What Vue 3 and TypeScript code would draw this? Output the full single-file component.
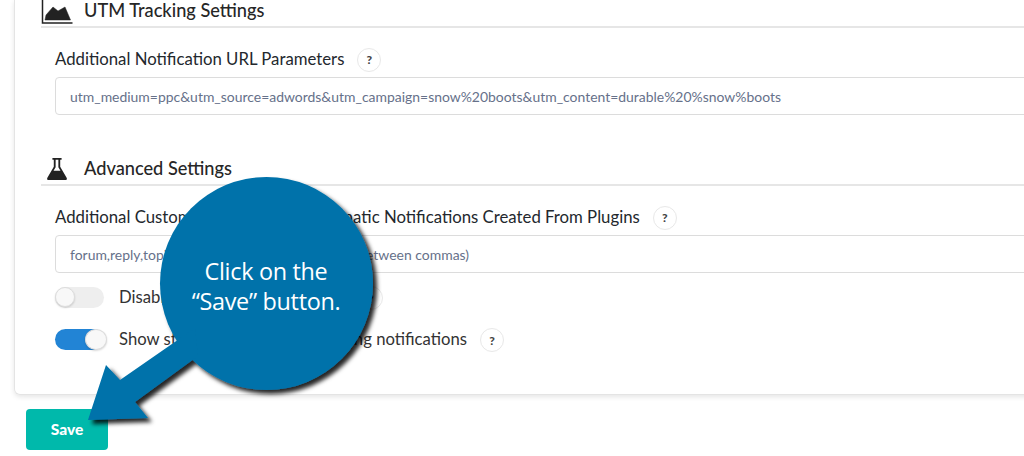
<script setup lang="ts">
/* Each section of the settings card is data; the callout sits over the page */
const sections = [
  {
    key: "utm",
    title: "UTM Tracking Settings",
    label: "Additional Notification URL Parameters",
    value: "utm_medium=ppc&utm_source=adwords&utm_campaign=snow%20boots&utm_content=durable%20%snow%boots",
  },
  {
    key: "advanced",
    title: "Advanced Settings",
    label: "Additional Custom Post Types for Automatic Notifications Created From Plugins",
    value: "forum,reply,topic,product,event,faq (No spaces between commas)",
  },
];

const toggles = [
  { key: "disable", label: "Disable automatic notifications", on: false },
  { key: "status", label: "Show status of all of your outgoing notifications", on: true },
];
</script>

<template>
  <div class="page">
    <div class="card">
      <section v-for="s in sections" :key="s.key" class="section" :class="`section-${s.key}`">
        <h2 class="heading">
          <span class="heading-icon">
            <svg v-if="s.key === 'utm'" width="32" height="24" viewBox="0 0 32 24">
              <path d="M1.500 0v23h30" fill="none" stroke="#222" stroke-width="1.500" />
              <path d="M4 20 L5 15 L12 7 L17 11 L24 7 L29.500 20 Z" fill="#222" stroke="#222" stroke-width="0.500"
                stroke-linejoin="round" />
            </svg>
            <svg v-else width="22" height="24" viewBox="0 0 24 26">
              <path
                d="M7 1h10v2h-1.500v7.500l7 12c.8 1.500 0 2.500-1.500 2.500H3c-1.500 0-2.300-1-1.500-2.500l7-12V3H7z M10.500 3v8L8.200 15h7.600L13.500 11V3z"
                fill="#222" fill-rule="evenodd" />
            </svg>
          </span>
          {{ s.title }}
        </h2>
        <div class="field">
          <div class="field-label">
            {{ s.label }}
            <span class="help">?</span>
          </div>
          <div class="input">{{ s.value }}</div>
        </div>
      </section>

      <div class="toggles">
        <div v-for="t in toggles" :key="t.key" class="toggle-row">
          <span class="switch" :class="{ on: t.on }"><span class="knob"></span></span>
          <span class="toggle-label">{{ t.label }}</span>
          <span class="help">?</span>
        </div>
      </div>
    </div>

    <button class="save" type="button">Save</button>

    <!-- CALLOUT -->
    <div class="callout">
      <svg class="callout-shape" width="1024" height="456" viewBox="0 0 1024 456">
        <defs>
          <filter id="callout-shadow" x="-20%" y="-20%" width="140%" height="140%">
            <feDropShadow dx="4" dy="4" stdDeviation="2" flood-color="#000" flood-opacity="0.85" />
          </filter>
        </defs>
        <g filter="url(#callout-shadow)" fill="#0272aa">
          <circle cx="266.500" cy="283.500" r="106.500" />
          <path d="M195 328 L120 380 L106 365 L88 420 L148 418 L135 402 L198 356 Z" />
        </g>
      </svg>
      <div class="callout-text">Click on the<br />“Save” button.</div>
    </div>
  </div>
</template>

<style>
html,
body {
  margin: 0;
  overflow: hidden;
  background: #fff;
}
</style>

<style scoped>
.page {
  position: relative;
  width: 1024px;
  height: 456px;
  overflow: hidden;
  font-family: Lato, "Open Sans", sans-serif;
  color: #222;
}

.card {
  box-sizing: border-box;
  width: 1060px;
  height: 395px;
  margin-left: 14px;
  padding-left: 26px;
  border: 1px solid #e4e4e4;
  border-top: 0;
  border-radius: 0 0 6px 6px;
  box-shadow: 0 2px 5px rgba(0, 0, 0, 0.1);
}

.section-advanced {
  margin-top: 35px;
}

.heading {
  display: flex;
  align-items: center;
  margin: 0;
  border-bottom: 2px solid #e6e6e6;
  font-size: 18.200px;
  font-weight: 500;
  color: #262626;
}

.section-utm .heading {
  height: 20px;
  padding-bottom: 6px;
}

.section-advanced .heading {
  height: 32px;
  padding-top: 2px;
}

.heading-icon {
  display: flex;
  width: 43px;
  flex: none;
}

.section-utm .heading-icon {
  align-self: flex-start;
}

.section-advanced .heading-icon svg {
  margin: 2px 0 0 5px;
}

.field {
  margin-left: 14px;
  padding-top: 18px;
}

.field-label {
  display: flex;
  align-items: center;
  height: 25px;
  margin-bottom: 6px;
  font-size: 16.750px;
  color: #23282d;
}

.help {
  display: inline-flex;
  align-items: center;
  justify-content: center;
  box-sizing: border-box;
  width: 24px;
  height: 24px;
  margin: 2px 0 0 13px;
  border: 1px solid #e8e8e8;
  border-radius: 50%;
  font-size: 12px;
  font-weight: 900;
  color: #444;
}

.input {
  display: flex;
  align-items: center;
  box-sizing: border-box;
  height: 38px;
  padding-left: 14px;
  border: 1px solid #dcdcdc;
  border-radius: 4px;
  font-size: 13.950px;
  color: #66718a;
  white-space: nowrap;
}

.toggles {
  display: flex;
  flex-direction: column;
  gap: 18px;
  margin: 12px 0 0 14px;
}

.toggle-row {
  display: flex;
  align-items: center;
  height: 24px;
}

.toggle-label {
  margin-left: 15px;
  font-size: 16.700px;
  color: #333;
  white-space: nowrap;
}

.switch {
  position: relative;
  display: block;
  flex: none;
  width: 49px;
  height: 21px;
  border-radius: 11px;
  background: #eeeeee;
}

.switch.on {
  background: #2284d5;
}

.knob {
  position: absolute;
  top: 0;
  left: 0;
  width: 20px;
  height: 20px;
  border: 1px solid #ddd;
  border-radius: 50%;
  background: #f8f8f8;
  box-sizing: border-box;
  box-shadow: 0 1px 2px rgba(0, 0, 0, 0.15);
}

.switch.on .knob {
  left: 30px;
  width: 22px;
  height: 21px;
}

.save {
  display: block;
  width: 82px;
  height: 41px;
  margin: 14px 0 0 26px;
  padding: 0 0 2px;
  border: 0;
  border-radius: 4px;
  background: #00b9ab;
  color: #fff;
  font-family: Lato, sans-serif;
  font-size: 15.500px;
  font-weight: 900;
}

.callout {
  position: absolute;
  inset: 0;
}

.callout-shape {
  display: block;
}

.callout-text {
  position: absolute;
  left: 166px;
  top: 256px;
  width: 200px;
  color: #fff;
  font-family: "Open Sans", sans-serif;
  font-size: 23.400px;
  letter-spacing: -0.3px;
  line-height: 30px;
  text-align: center;
}
</style>
